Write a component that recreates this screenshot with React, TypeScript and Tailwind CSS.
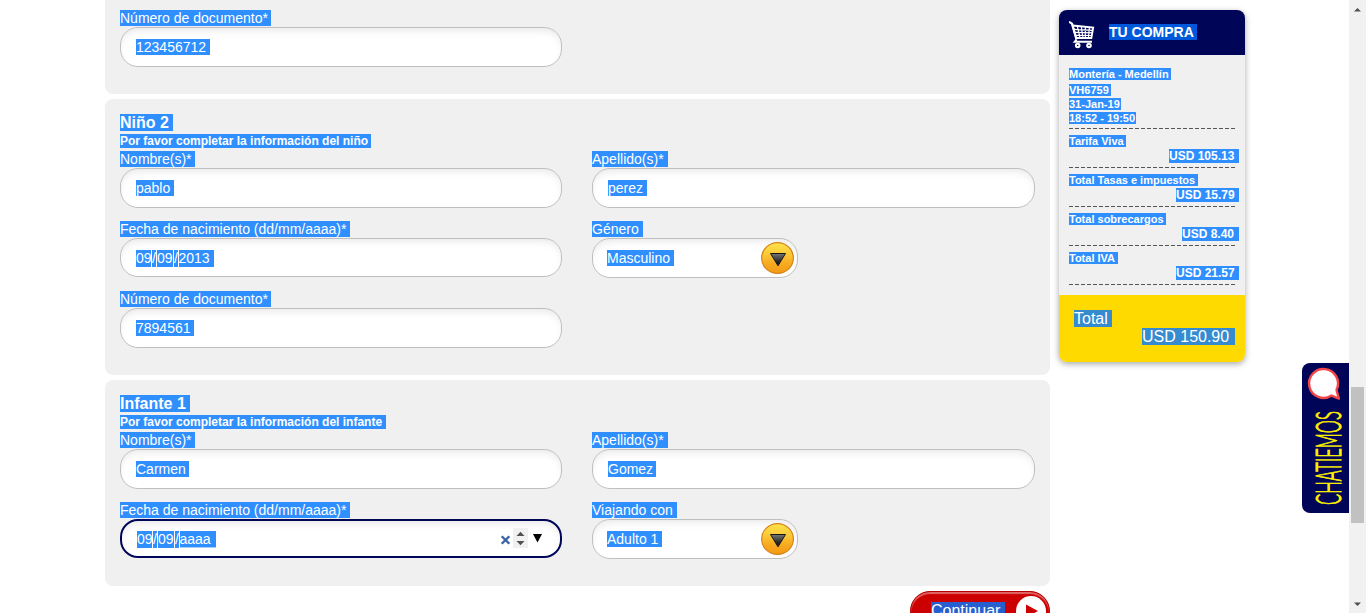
import type { ReactNode } from 'react';

function Mark({ children, className = '' }: { children: ReactNode; className?: string }) {
  return (
    <span className={`block shrink-0 whitespace-pre bg-[#308fff] text-white ${className}`}>{children}</span>
  );
}

function Field({ label, labelClass, children, className = '' }: { label: string; labelClass: string; children: ReactNode; className?: string }) {
  return (
    <div className={`flex flex-col items-start ${className}`}>
      <Mark className={`mb-px h-4 text-[14px] leading-4 ${labelClass}`}>{label}</Mark>
      {children}
    </div>
  );
}

function TextBox({ value, valueClass, className = 'w-[442px]' }: { value: string; valueClass: string; className?: string }) {
  return (
    <div className={`flex h-10 items-center rounded-[18px] border border-[#bfbfbf] bg-white pl-[15px] shadow-[inset_0_5px_9px_-3px_rgba(0,0,0,0.1)] ${className}`}>
      <Mark className={`h-4 text-[14px] leading-4 ${valueClass}`}>{value}</Mark>
    </div>
  );
}

function DateParts({ year, yearClass }: { year: string; yearClass: string }) {
  return (
    <div className="flex pt-px text-[14px] leading-[17px]">
      <Mark className="h-[17px] w-[15px]">09</Mark>
      <Mark className="ml-px h-[17px] w-1">/</Mark>
      <Mark className="ml-px h-[17px] w-4">09</Mark>
      <Mark className="ml-px h-[17px] w-[3.5px]">/</Mark>
      <Mark className={`h-[17px] ${yearClass}`}>{year}</Mark>
    </div>
  );
}

function Select({ value, valueClass, id }: { value: string; valueClass: string; id: string }) {
  return (
    <div className="flex h-10 w-[206px] items-center justify-between rounded-[18px] border border-[#bfbfbf] bg-white pl-3.5 pr-[3px] shadow-[inset_0_5px_9px_-3px_rgba(0,0,0,0.1)]">
      <Mark className={`h-4 text-[14px] leading-4 ${valueClass}`}>{value}</Mark>
      <svg width="33" height="32" viewBox="0 0 33 32">
        <defs>
          <linearGradient id={`${id}-disc`} x1="0" y1="0" x2="0" y2="1">
            <stop offset="0" stopColor="#fbe34a" />
            <stop offset="0.35" stopColor="#fbcb3a" />
            <stop offset="0.7" stopColor="#f7a91f" />
            <stop offset="1" stopColor="#f49a14" />
          </linearGradient>
          <linearGradient id={`${id}-arrow`} x1="0" y1="0" x2="0" y2="1">
            <stop offset="0" stopColor="#777" />
            <stop offset="0.7" stopColor="#222" />
          </linearGradient>
        </defs>
        <ellipse cx="16.5" cy="16" rx="15.9" ry="15.4" fill={`url(#${id}-disc)`} stroke="#d5841a" strokeWidth="1.2" />
        <path d="M9.5 11.5h15L17 23.8z" fill={`url(#${id}-arrow)`} stroke="#161616" strokeWidth="1" />
      </svg>
    </div>
  );
}

function PassengerHead({ title, titleClass, note, noteClass }: { title: string; titleClass: string; note: string; noteClass: string }) {
  return (
    <div className="flex flex-col items-start">
      <Mark className={`mb-[3px] h-[17px] text-[16px] font-bold leading-[17px] ${titleClass}`}>{title}</Mark>
      <Mark className={`mb-[3px] h-3.5 text-[12px] font-bold leading-3.5 ${noteClass}`}>{note}</Mark>
    </div>
  );
}

function Dashes() {
  return (
    <svg className="block" width="167" height="1">
      <path d="M0 .5h166" stroke="#555" strokeDasharray="4 2" />
    </svg>
  );
}

const fares = [
  { name: 'Tarifa Viva', amount: 'USD 105.13', nameClass: 'w-[57px]', amountClass: 'w-[69.5px]' },
  { name: 'Total Tasas e impuestos', amount: 'USD 15.79', nameClass: 'w-[129px]', amountClass: 'w-[62.5px]' },
  { name: 'Total sobrecargos', amount: 'USD 8.40', nameClass: 'w-[97px]', amountClass: 'w-[56.5px]' },
  { name: 'Total IVA', amount: 'USD 21.57', nameClass: 'w-[49px]', amountClass: 'w-[62.5px]' },
];

function Purchase() {
  return (
    <aside className="mt-2.5 h-[352px] w-[186px] shrink-0 overflow-hidden rounded-lg bg-[#f0f0f0] shadow-[0_2px_6px_rgba(0,0,0,0.35)]">
      <header className="flex h-[45px] bg-[#000558] pl-2.5">
        <svg className="mt-[11px] shrink-0" width="26" height="28" viewBox="0 0 26 28" fill="none" stroke="#fff">
          <path d="M0 .8l3 1.8L7.5 18.5" strokeWidth="2.2" />
          <path d="M3.6 4.5l20.6 2-1.8 10.5H7.2z" strokeWidth="1.8" />
          <path d="M4.6 8.3l19 1M5.6 11.3l17.7.6M6.5 14.3l16.3.2M8.3 5.2L11 17M12.3 5.5L14 17M16.4 6v11M20.4 6.2L19.4 17" strokeWidth="1.2" />
          <path d="M7.5 18.5l-1.8 2.3h17.3" strokeWidth="2" />
          <circle cx="8.7" cy="24.5" r="1.8" strokeWidth="2" />
          <circle cx="20" cy="24.5" r="1.8" strokeWidth="2" />
        </svg>
        <span className="ml-3.5 mt-3.5 block h-4 w-[88px] whitespace-pre bg-[#0059da] text-[14px] font-bold leading-4 text-white">TU COMPRA</span>
      </header>
      <div className="flex h-[240px] flex-col items-start pl-2.5 pt-[13px] text-[11px] font-bold leading-3">
        <Mark className="mb-1 h-3 w-[102px]">Montería - Medellín</Mark>
        <Mark className="mb-0.5 h-3 w-[42px]">VH6759</Mark>
        <Mark className="mb-0.5 h-3 w-[52px]">31-Jan-19</Mark>
        <Mark className="mb-1 h-3 w-[67px]">18:52 - 19:50</Mark>
        <Dashes />
        {fares.map((f) => (
          <div key={f.name} className="flex h-[39px] w-[169.5px] flex-col items-start pt-1.5">
            <Mark className={`mb-0.5 h-3 ${f.nameClass}`}>{f.name}</Mark>
            <Mark className={`mb-1 h-3.5 self-end text-[12px] leading-3.5 ${f.amountClass}`}>{f.amount}</Mark>
            <Dashes />
          </div>
        ))}
      </div>
      <div className="flex h-[67px] flex-col items-start bg-[#ffda00] pl-[15px] pr-2.5 pt-[15px] text-[16px] leading-[17px] text-white">
        <span className="mb-px block h-[17px] w-[38px] bg-[#368bcf]">Total</span>
        <span className="block h-[17px] w-[93px] self-end whitespace-pre bg-[#368bcf]">USD 150.90</span>
      </div>
    </aside>
  );
}

export default function App() {
  return (
    <div className="flex h-[613px] w-[1366px] overflow-hidden bg-white font-['Liberation_Sans',Arial,sans-serif]">
      <main className="ml-[105px] flex w-[945px] shrink-0 flex-col">
        <section className="mb-[5px] h-[94px] shrink-0 rounded-b-lg bg-[#f0f0f0] px-[15px] pt-2.5">
          <Field label="Número de documento*" labelClass="w-[151px]">
            <TextBox value="123456712" valueClass="w-[74px]" />
          </Field>
        </section>

        <section className="mb-[5px] h-[276px] shrink-0 rounded-lg bg-[#f0f0f0] px-[15px] pt-[15px]">
          <PassengerHead title="Niño 2" titleClass="w-[53px]" note="Por favor completar la información del niño" noteClass="w-[251px]" />
          <div className="grid grid-cols-[442px_443px] gap-x-[30px]">
            <Field label="Nombre(s)*" labelClass="w-[75px]" className="h-[70px]">
              <TextBox value="pablo" valueClass="w-[38px]" />
            </Field>
            <Field label="Apellido(s)*" labelClass="w-[76px]">
              <TextBox value="perez" valueClass="w-[39px]" className="w-[443px]" />
            </Field>
            <Field label="Fecha de nacimiento (dd/mm/aaaa)*" labelClass="w-[230px]" className="h-[70px]">
              <div className="flex h-[39px] w-[442px] items-center rounded-[18px] border border-[#bfbfbf] bg-white pl-[15px] shadow-[inset_0_5px_9px_-3px_rgba(0,0,0,0.1)]">
                <DateParts year="2013" yearClass="ml-px w-[35.5px]" />
              </div>
            </Field>
            <Field label="Género" labelClass="w-[51px]">
              <Select id="gender" value="Masculino" valueClass="w-[67px]" />
            </Field>
            <Field label="Número de documento*" labelClass="w-[151px]">
              <TextBox value="7894561" valueClass="w-[58px]" />
            </Field>
          </div>
        </section>

        <section className="mb-[5px] h-[206px] shrink-0 rounded-lg bg-[#f0f0f0] px-[15px] pt-[15px]">
          <PassengerHead title="Infante 1" titleClass="w-[70px]" note="Por favor completar la información del infante" noteClass="w-[266px]" />
          <div className="grid grid-cols-[442px_443px] gap-x-[30px]">
            <Field label="Nombre(s)*" labelClass="w-[75px]" className="h-[70px]">
              <TextBox value="Carmen" valueClass="w-[53px]" />
            </Field>
            <Field label="Apellido(s)*" labelClass="w-[76px]">
              <TextBox value="Gomez" valueClass="w-[48px]" className="w-[443px]" />
            </Field>
            <Field label="Fecha de nacimiento (dd/mm/aaaa)*" labelClass="w-[230px]">
              <div className="flex h-[39px] w-[442px] items-center justify-between rounded-[18px] border-2 border-[#000558] bg-white pl-[15px] pr-4 shadow-[inset_0_5px_9px_-3px_rgba(0,0,0,0.1)]">
                <DateParts year="aaaa" yearClass="ml-px w-[36px] border-b border-[#a9cff8] bg-[#1e88ff]" />
                <svg className="mb-px" width="44" height="20" viewBox="0 0 44 20">
                  <path d="M1.7 8.2l7.6 7.6M9.3 8.2l-7.6 7.6" stroke="#3b63a8" strokeWidth="2.3" />
                  <path d="M13 0h15v20H13z" fill="#f0f0f0" />
                  <path d="M16.5 8l4-4.3 4 4.3zM16.5 13l4 4.3 4-4.3z" fill="#505050" />
                  <path d="M33 6h9l-4.5 8.5z" fill="#000" />
                </svg>
              </div>
            </Field>
            <Field label="Viajando con" labelClass="w-[85px]">
              <Select id="adult" value="Adulto 1" valueClass="w-[55px]" />
            </Field>
          </div>
        </section>

        <button className="flex h-10 w-[140px] shrink-0 items-start justify-between self-end rounded-[20px] border border-[#b50000] bg-[#cc0000] pl-5 pr-[3px] pt-1 shadow-[inset_0_2px_1px_rgba(255,255,255,0.4)]">
          <span className="mt-1.5 block h-[18px] w-[74px] whitespace-pre bg-[#285fd0] text-left text-[16px] leading-[17px] text-white">Continuar</span>
          <svg width="30" height="30" viewBox="0 0 30 30">
            <circle cx="15" cy="15" r="15" fill="#fff" />
            <path d="M10 8.5l12 6.5-12 6.5z" fill="#cc0000" />
          </svg>
        </button>
      </main>

      <div className="ml-[9px]">
        <Purchase />
      </div>

      <div className="ml-auto mt-[363px] h-[150px] w-[47px] shrink-0 rounded-l-lg bg-[#000558]">
        <svg width="47" height="150" viewBox="0 0 47 150">
          <path d="M29.5 32.6a14.5 14.5 0 1 1 5-5.6l2.4 8.6z" fill="#fff" stroke="#f34747" strokeWidth="2.4" strokeLinejoin="round" />
          <g transform="translate(39 142) rotate(-90)">
            <text x="0" y="0" transform="scale(.43 1)" fontFamily="Lato, sans-serif" fontWeight="300" fontSize="36" fill="#fff200" stroke="#fff200" strokeWidth="0.8" vectorEffect="non-scaling-stroke" textLength="218" lengthAdjust="spacingAndGlyphs">CHATIEMOS</text>
          </g>
        </svg>
      </div>

      <div className="flex h-[613px] w-[17px] shrink-0 flex-col items-center bg-[#f1f1f1]">
        <svg className="mt-[7px]" width="7" height="5" viewBox="0 0 7 5">
          <path d="M0 4.5L3.5 1 7 4.5z" fill="#505050" />
        </svg>
        <div className="mt-[375px] h-[136px] w-[13px] bg-[#c1c1c1]" />
        <svg className="mt-[79px]" width="7" height="5" viewBox="0 0 7 5">
          <path d="M0 .5h7L3.5 4z" fill="#505050" />
        </svg>
      </div>
    </div>
  );
}
